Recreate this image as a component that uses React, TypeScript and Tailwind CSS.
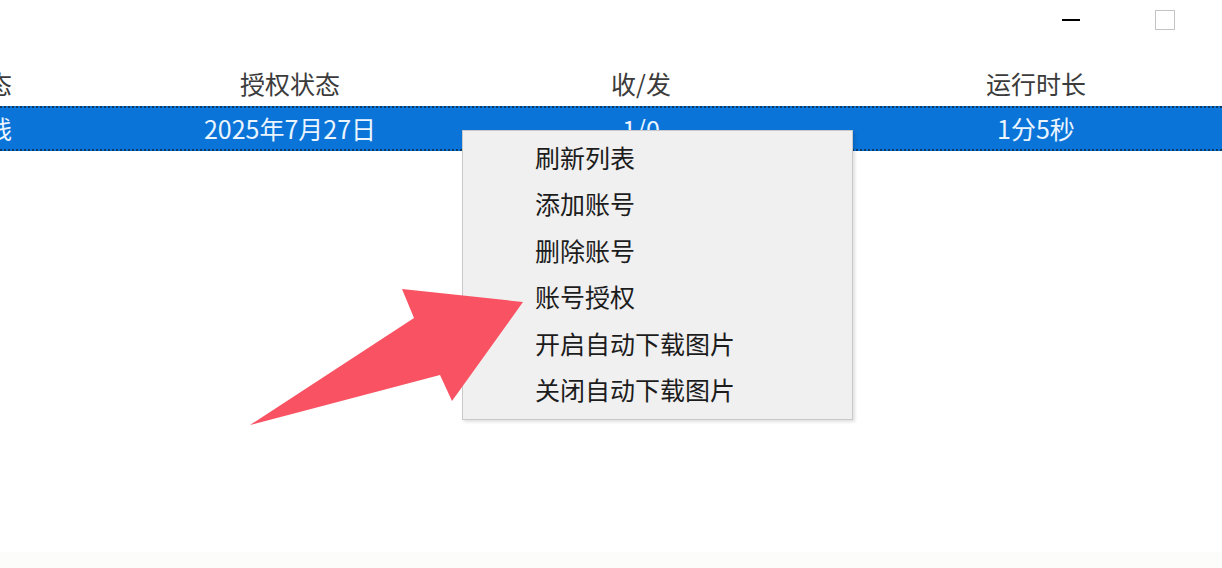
const FONT = "font-['Microsoft_YaHei','Noto_Sans_CJK_SC',sans-serif]";

const columns = [
  { title: "状态", value: "在线", width: "w-[250px]" },
  { title: "授权状态", value: "2025年7月27日", width: "w-[350px]" },
  { title: "收/发", value: "1/0", width: "w-[352px]" },
  { title: "运行时长", value: "1分5秒", width: "w-[438px]" },
];

const menuItems = [
  "刷新列表",
  "添加账号",
  "删除账号",
  "账号授权",
  "开启自动下载图片",
  "关闭自动下载图片",
];

function TitleBar() {
  return (
    <div className="flex h-[40px] shrink-0 items-center justify-end gap-[75px] pr-[47px]">
      <div className="h-[2px] w-[18px] bg-black" />
      <div className="h-[20px] w-[20px] border border-[#c4c4c4]" />
    </div>
  );
}

function ContextMenu() {
  return (
    <div className="absolute left-[462px] top-[130px] w-[391px] border border-[#c9c9c9] bg-[#f0f0f0] pb-[6px] pt-[3px] shadow-[2px_2px_3px_rgba(0,0,0,0.12)]">
      {menuItems.map((item) => (
        <div
          key={item}
          className="flex h-[46.5px] items-center pl-[72px] text-[25px] leading-none text-[#1c1c1c]"
        >
          {item}
        </div>
      ))}
    </div>
  );
}

function Arrow() {
  return (
    <svg
      className="pointer-events-none absolute left-0 top-0"
      width="1222"
      height="568"
      viewBox="0 0 1222 568"
    >
      <polygon
        points="250,425 414,318 402,289 523,302 452,401 440,375"
        fill="#f95263"
      />
    </svg>
  );
}

export default function App() {
  return (
    <div
      className={`relative flex h-[568px] w-[1222px] flex-col overflow-hidden bg-white ${FONT}`}
    >
      <TitleBar />

      {/* header, first column scrolled mostly out of view */}
      <div className="-ml-[141px] flex h-[66px] shrink-0 items-center pt-[20px]">
        {columns.map((c, i) => (
          <div
            key={c.title}
            className={`${i === 0 ? "w-[256px]" : c.width} shrink-0 text-center text-[25px] leading-none text-[#3b3b3b]`}
          >
            {c.title}
          </div>
        ))}
      </div>

      {/* selected row */}
      <div className="-ml-[141px] flex h-[45px] shrink-0 items-center border-y-2 border-dotted border-[#0b3a66] bg-[#0a74d8]">
        {columns.map((c, i) => (
          <div
            key={c.title}
            className={`${i === 0 ? "w-[256px]" : c.width} shrink-0 text-center text-[25px] leading-none text-[#eaf5ff]`}
          >
            {c.value}
          </div>
        ))}
      </div>

      <div className="flex-1" />
      <div className="h-[16px] shrink-0 bg-[#fcfcfa]" />

      <ContextMenu />
      <Arrow />
    </div>
  );
}
